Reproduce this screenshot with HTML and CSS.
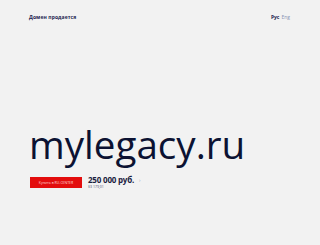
FILE: index.html
```html
<!DOCTYPE html>
<html lang="ru">
<head>
<meta charset="utf-8">
<link rel="stylesheet" href="styles.css">
</head>
<body>
<div class="page">
  <header class="top">
    <div class="brand">Домен продается</div>
    <nav class="langs"><span class="lang active">Рус</span><span class="lang">Eng</span></nav>
  </header>
  <main class="main">
    <h1 class="domain">mylegacy.ru</h1>
    <div class="offer">
      <a class="buy">Купить в RU-CENTER</a>
      <div class="price-box">
        <div class="price-row"><span class="price">250 000 руб.</span><span class="info">›</span></div>
        <div class="sub">$3 179,01</div>
      </div>
    </div>
  </main>
</div>
</body>
</html>
```
FILE: styles.css
```css
html, body {
  margin: 0;
  padding: 0;
  background: #f2f2f2;
}
body {
  font-family: "Open Sans", "Noto Sans", sans-serif;
  color: #111838;
  width: 320px;
  height: 245px;
  overflow: hidden;
}
.page {
  padding: 0 30px 0 29px;
}
.top {
  display: flex;
  justify-content: space-between;
  align-items: center;
  height: 34px;
}
.brand {
  font-size: 5px;
  font-weight: 700;
  color: #1d2550;
  letter-spacing: 0.1px;
}
.langs {
  display: flex;
  gap: 2px;
  font-size: 5px;
}
.lang {
  color: #8a93b4;
}
.lang.active {
  color: #1d2550;
  font-weight: 700;
}
.main {
  padding-top: 87px;
}
.domain {
  margin: 0;
  font-size: 38.6px;
  font-weight: 400;
  line-height: 46px;
  color: #0c1232;
}
.offer {
  display: flex;
  align-items: flex-start;
  gap: 6px;
  margin-top: 10px;
  margin-left: 1px;
}
.buy {
  display: flex;
  align-items: center;
  justify-content: center;
  width: 52px;
  height: 11px;
  background: #e30d0d;
  color: #ffd9d9;
  font-size: 3.5px;
  text-decoration: none;
}
.price-box {
  display: flex;
  flex-direction: column;
  margin-top: -3px;
}
.price-row {
  display: flex;
  align-items: center;
  gap: 5px;
}
.price {
  font-size: 8px;
  font-weight: 700;
  color: #1a2140;
  letter-spacing: -0.2px;
}
.info {
  font-size: 5px;
  color: #9aa0b4;
}
.sub {
  font-size: 3.5px;
  color: #4a5070;
  margin-top: -1px;
}
```
